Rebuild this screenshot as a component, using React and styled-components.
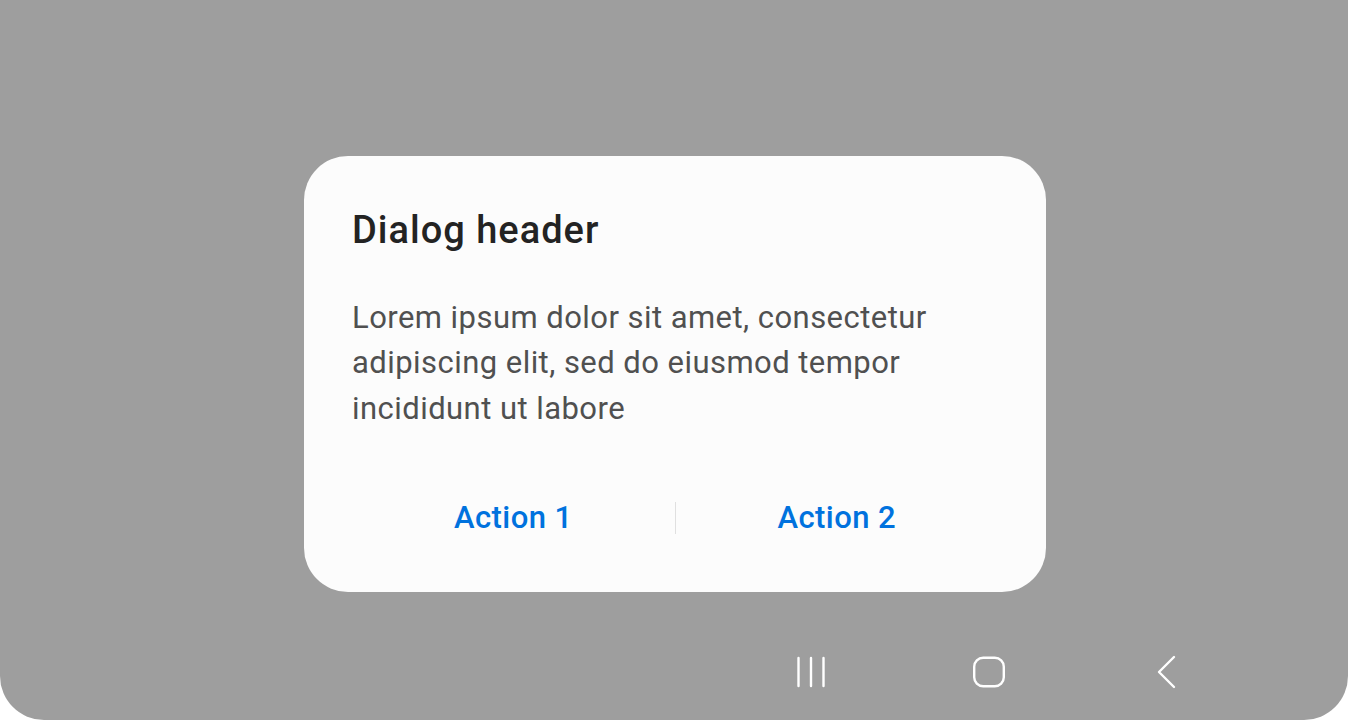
import React from 'react'
import styled, { createGlobalStyle } from 'styled-components'

const GlobalStyle = createGlobalStyle`
    html, body {
        margin: 0;
        padding: 0;
        background: #ffffff;
        font-family: Roboto, "Noto Sans", sans-serif;
    }
`;

function RecentsIcon() {
    return (
        <svg width="32" height="32" viewBox="0 0 32 32" fill="none">
            <g stroke="#ffffff" strokeWidth="2.4" strokeLinecap="round">
                <line x1="3.5" y1="2" x2="3.5" y2="30" />
                <line x1="16" y1="2" x2="16" y2="30" />
                <line x1="28.5" y1="2" x2="28.5" y2="30" />
            </g>
        </svg>
    )
}

function HomeIcon() {
    return (
        <svg width="34" height="32" viewBox="0 0 34 32" fill="none">
            <rect x="2.2" y="1.7" width="29.6" height="28.6" rx="9" stroke="#ffffff" strokeWidth="2.4" />
        </svg>
    )
}

function BackIcon() {
    return (
        <svg width="22" height="34" viewBox="0 0 22 34" fill="none">
            <polyline points="18,2 3,17 18,32" stroke="#ffffff" strokeWidth="2.4" strokeLinecap="round" strokeLinejoin="round" />
        </svg>
    )
}

function App() {
    return (
        <>
            <GlobalStyle />
            <Screen>
                <Dialog>
                    <Title>Dialog header</Title>
                    <Body>
                        Lorem ipsum dolor sit amet, consectetur adipiscing elit, sed do eiusmod tempor incididunt ut labore
                    </Body>
                    <Actions>
                        <ActionButton>Action 1</ActionButton>
                        <Divider />
                        <ActionButton>Action 2</ActionButton>
                    </Actions>
                </Dialog>
                <NavBar>
                    <NavButton aria-label="Recents"><RecentsIcon /></NavButton>
                    <NavButton aria-label="Home"><HomeIcon /></NavButton>
                    <NavButton aria-label="Back"><BackIcon /></NavButton>
                </NavBar>
            </Screen>
        </>
    )
}

const Screen = styled.div`
    width: 1348px;
    height: 720px;
    box-sizing: border-box;
    padding-left: 2px;
    background: #9e9e9e;
    border-radius: 0 0 44px 44px;
    display: flex;
    flex-direction: column;
    justify-content: flex-end;
    overflow: hidden;
`;

const Dialog = styled.div`
    width: 742px;
    box-sizing: border-box;
    margin: 0 auto 32px;
    padding: 50px 48px 42px;
    background: #fcfcfc;
    border-radius: 44px;
    display: flex;
    flex-direction: column;
`;

const Title = styled.h2`
    margin: 0;
    font-size: 38px;
    line-height: 48px;
    letter-spacing: 1px;
    font-weight: 500;
    color: #232323;
`;

const Body = styled.p`
    margin: 41px 0 0;
    font-size: 31px;
    line-height: 45.5px;
    letter-spacing: 0.45px;
    font-weight: 400;
    color: #505050;
`;

const Actions = styled.div`
    margin-top: 55px;
    display: flex;
    align-items: center;
    height: 64px;
`;

const ActionButton = styled.button`
    flex: 1;
    height: 64px;
    border: none;
    background: none;
    padding: 0;
    font-family: Roboto, "Noto Sans", sans-serif;
    font-size: 31px;
    line-height: 64px;
    letter-spacing: 0.4px;
    font-weight: 500;
    color: #0072de;
    cursor: pointer;
`;

const Divider = styled.div`
    width: 1px;
    height: 32px;
    background: #e0e0e0;
`;

const NavBar = styled.div`
    height: 96px;
    display: flex;
    justify-content: flex-end;
    align-items: center;
    padding-right: 92px;
`;

const NavButton = styled.button`
    width: 178px;
    height: 96px;
    border: none;
    background: none;
    padding: 0;
    display: flex;
    align-items: center;
    justify-content: center;
`;

export default App
